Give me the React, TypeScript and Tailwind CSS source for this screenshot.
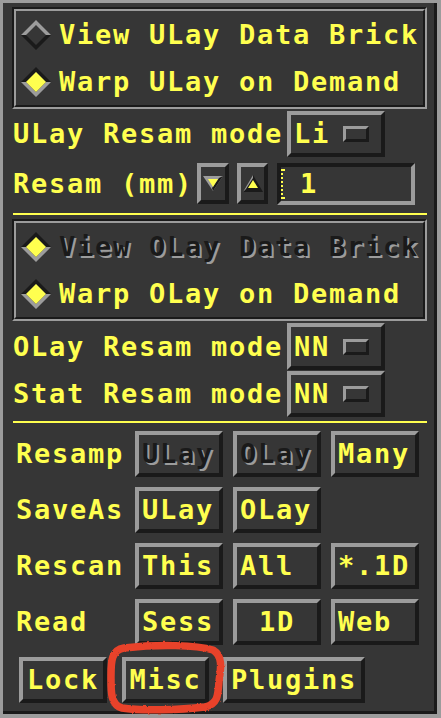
import { ReactNode } from 'react'

const font = "font-['DejaVu_Sans_Mono',monospace] font-bold text-[27px] leading-[30px] tracking-[1.75px]"
const yellow = 'text-[#ffff4f]'
const dim = 'text-[#1a1a1a] [text-shadow:2px_2px_0_#9c9c9c]'
const raised = 'border-4 border-t-[#9c9c9c] border-l-[#9c9c9c] border-b-[#1a1a1a] border-r-[#1a1a1a]'
const sunken = 'border-4 border-t-[#1a1a1a] border-l-[#1a1a1a] border-b-[#9c9c9c] border-r-[#9c9c9c]'

function Diamond({ on }: { on: boolean }) {
  const top = on ? '#1a1a1a' : '#9c9c9c'
  const bottom = on ? '#9c9c9c' : '#1a1a1a'
  return (
    <svg width="30" height="30" viewBox="0 0 30 30" className="shrink-0">
      <polygon points="0,15 15,0 30,15 25,15 15,5 5,15" fill={top} />
      <polygon points="0,15 15,30 30,15 25,15 15,25 5,15" fill={bottom} />
      {on && <polygon points="5,15 15,5 25,15 15,25" fill="#ffff4f" />}
    </svg>
  )
}

function Radio({ label, on, disabled = false }: { label: string; on: boolean; disabled?: boolean }) {
  return (
    <div className="h-[47px] flex items-center pl-[5px]">
      <Diamond on={on} />
      <span className={`ml-[8px] whitespace-pre ${disabled ? dim : yellow}`}>{label}</span>
    </div>
  )
}

function EtchedBox({ children }: { children: ReactNode }) {
  return (
    <div className="ml-[9px] w-[415px] border-2 border-t-[#1a1a1a] border-l-[#1a1a1a] border-b-[#9c9c9c] border-r-[#9c9c9c]">
      <div className="border-2 border-t-[#9c9c9c] border-l-[#9c9c9c] border-b-[#1a1a1a] border-r-[#1a1a1a]">
        {children}
      </div>
    </div>
  )
}

function OptionMenu({ value }: { value: string }) {
  return (
    <div className={`w-[98px] h-full flex items-center ${raised}`}>
      <span className={`pl-[3px] ${yellow}`}>{value}</span>
      <div className="ml-auto mr-[12px] w-[26px] h-[16px] border-[3px] border-t-[#9c9c9c] border-l-[#9c9c9c] border-b-[#1a1a1a] border-r-[#1a1a1a]" />
    </div>
  )
}

function Btn({
  label,
  disabled = false,
  center = false,
  w = 'w-[88px]',
}: {
  label: string
  disabled?: boolean
  center?: boolean
  w?: string
}) {
  return (
    <div
      className={`${w} h-[46px] flex items-center ${center ? 'justify-center' : 'pl-[3px]'} ${raised} ${
        disabled ? dim : yellow
      }`}
    >
      {label}
    </div>
  )
}

function GridRow({ label, buttons }: { label: string; buttons: ReactNode }) {
  return (
    <div className="h-[46px] flex items-center pl-[13px]">
      <span className={`w-[119px] ${yellow}`}>{label}</span>
      <div className="flex gap-[10px]">{buttons}</div>
    </div>
  )
}

export default function App() {
  return (
    <div className={`relative w-[441px] h-[718px] bg-[#9c9c9c] overflow-hidden ${font}`}>
      <div className="ml-[3px] mt-[3px] w-[434px] h-[711px] bg-[#363636] border-r-[3px] border-b-[3px] border-[#1a1a1a]">
        <div className="pt-[4px]">
          <EtchedBox>
            <Radio label="View ULay Data Brick" on={false} />
            <Radio label="Warp ULay on Demand" on />
          </EtchedBox>
        </div>

        {/* ULay resample mode */}
        <div className="mt-[2px] h-[46px] flex items-center pl-[10px]">
          <span className={`w-[274px] whitespace-pre ${yellow}`}>ULay Resam mode</span>
          <OptionMenu value="Li" />
        </div>

        {/* resample size */}
        <div className="mt-[6px] h-[42px] flex items-start pl-[10px]">
          <span className={`w-[184px] h-[41px] flex items-center whitespace-pre ${yellow}`}>Resam (mm)</span>
          <div className={`w-[32px] h-[41px] flex items-center justify-center ${raised}`}>
            <svg width="20" height="15" viewBox="0 0 20 15">
              <polygon points="0,0 20,0 10,15" fill="#9c9c9c" />
              <polygon points="20,0 10,15 9,12 16,2" fill="#1a1a1a" />
              <polygon points="5,3 15,3 10,11" fill="#ffff4f" />
            </svg>
          </div>
          <div className={`ml-[8px] w-[31px] h-[41px] flex items-center justify-center ${raised}`}>
            <svg width="20" height="17" viewBox="0 0 20 17">
              <polygon points="10,0 20,17 0,17" fill="#1a1a1a" />
              <polygon points="10,0 0,17 3,14 10,3" fill="#9c9c9c" />
              <polygon points="10,5 15,13 5,13" fill="#ffff4f" />
            </svg>
          </div>
          <div className={`ml-[9px] w-[138px] h-[42px] flex items-center ${sunken}`}>
            <svg width="4" height="30" viewBox="0 0 4 30" className="shrink-0">
              <rect x="0" y="0" width="4" height="2" fill="#ffff4f" />
              <rect x="0" y="4" width="2" height="2" fill="#ffff4f" />
              <rect x="0" y="8" width="2" height="2" fill="#ffff4f" />
              <rect x="0" y="12" width="2" height="2" fill="#ffff4f" />
              <rect x="0" y="16" width="2" height="2" fill="#ffff4f" />
              <rect x="0" y="20" width="2" height="2" fill="#ffff4f" />
              <rect x="0" y="24" width="2" height="2" fill="#ffff4f" />
              <rect x="0" y="28" width="4" height="2" fill="#ffff4f" />
            </svg>
            <span className={`ml-[15px] ${yellow}`}>1</span>
          </div>
        </div>

        <div className="mt-[8px] ml-[10px] w-[414px] h-[2px] bg-[#ffff4f]" />

        <div className="mt-[4px]">
          <EtchedBox>
            <Radio label="View OLay Data Brick" on disabled />
            <Radio label="Warp OLay on Demand" on />
          </EtchedBox>
        </div>

        <div className="mt-[2px] h-[47px] flex items-center pl-[10px]">
          <span className={`w-[274px] whitespace-pre ${yellow}`}>OLay Resam mode</span>
          <OptionMenu value="NN" />
        </div>
        <div className="mt-[1px] h-[46px] flex items-center pl-[10px]">
          <span className={`w-[274px] whitespace-pre ${yellow}`}>Stat Resam mode</span>
          <OptionMenu value="NN" />
        </div>

        <div className="mt-[4px] ml-[10px] w-[414px] h-[2px] bg-[#ffff4f]" />

        <div className="mt-[8px] flex flex-col gap-[10px]">
          <GridRow
            label="Resamp"
            buttons={
              <>
                <Btn label="ULay" disabled />
                <Btn label="OLay" disabled />
                <Btn label="Many" />
              </>
            }
          />
          <GridRow
            label="SaveAs"
            buttons={
              <>
                <Btn label="ULay" />
                <Btn label="OLay" />
              </>
            }
          />
          <GridRow
            label="Rescan"
            buttons={
              <>
                <Btn label="This" />
                <Btn label="All" />
                <Btn label="*.1D" />
              </>
            }
          />
          <GridRow
            label="Read"
            buttons={
              <>
                <Btn label="Sess" />
                <Btn label="1D" center />
                <Btn label="Web" />
              </>
            }
          />
        </div>

        <div className="mt-[12px] flex pl-[16px]">
          <Btn label="Lock" center w="w-[88px]" />
          <div className="ml-[15px]">
            <Btn label="Misc" center w="w-[87px]" />
          </div>
          <div className="ml-[14px]">
            <Btn label="Plugins" center w="w-[142px]" />
          </div>
        </div>
      </div>

      {/* red hand-drawn mark around Misc */}
      <svg className="absolute left-0 top-0 pointer-events-none" width="441" height="718" viewBox="0 0 441 718">
        <defs>
          <filter id="rough">
            <feTurbulence type="fractalNoise" baseFrequency="0.3" numOctaves="2" seed="3" />
            <feDisplacementMap in="SourceGraphic" scale="2.5" />
          </filter>
        </defs>
        <path
          d="M 124 648 C 160 644, 196 645, 213 650 C 223 656, 221 668, 219 681 C 218 695, 218 704, 205 707 C 180 710, 140 711, 122 708 C 110 705, 111 690, 111 675 C 111 660, 112 650, 124 648 Z"
          fill="none"
          stroke="#e8432b"
          strokeWidth="7.5"
          strokeLinejoin="round"
          filter="url(#rough)"
        />
      </svg>
    </div>
  )
}
